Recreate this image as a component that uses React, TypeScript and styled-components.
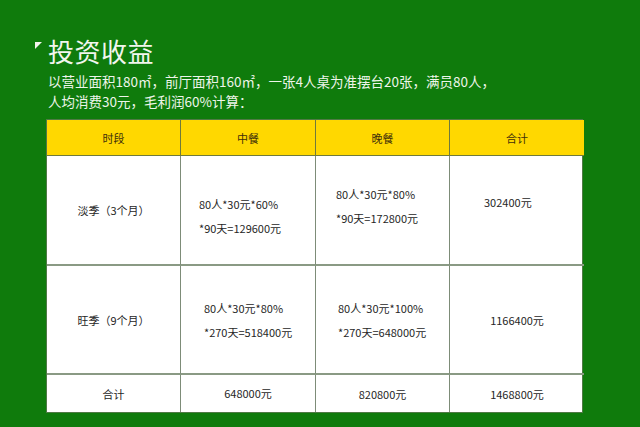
import React from "react";
import styled, { createGlobalStyle } from "styled-components";

const GlobalStyle = createGlobalStyle`
  html, body {
    margin: 0;
    padding: 0;
    background: #0f7b0c;
  }
  body {
    font-family: "Noto Sans CJK SC", "Noto Sans", sans-serif;
  }
`;

const Page = styled.div`
  width: 640px;
  height: 427px;
  background: #0f7b0c;
  padding: 34px 0 0 35px;
  box-sizing: border-box;
  overflow: hidden;
`;

const TitleRow = styled.div`
  display: flex;
  align-items: flex-start;
`;

const Marker = styled.span`
  width: 0;
  height: 0;
  margin-top: 8px;
  margin-right: 6px;
  border-top: 7px solid #f4f4ec;
  border-right: 7px solid transparent;
`;

const Title = styled.h1`
  margin: 0;
  font-size: 26px;
  font-weight: 400;
  line-height: 34px;
  color: #f2f6ee;
  letter-spacing: 0.5px;
`;

const Intro = styled.p`
  margin: 3px 0 0 13px;
  font-size: 13.5px;
  line-height: 20px;
  color: #eef5ea;
`;

const Table = styled.div`
  margin: 8px 0 0 11px;
  width: 537px;
  display: grid;
  grid-template-columns: 134px 135px 134px 134px;
  grid-template-rows: 36px 110px 109px 37px;
  background: #fff;
  border: 1px solid #4f7a45;
  box-sizing: border-box;
`;

const HeadCell = styled.div`
  background: #ffd800;
  display: flex;
  align-items: center;
  justify-content: center;
  font-size: 11px;
  color: #3f300a;
  border-right: 1px solid #6f7a3c;
  border-bottom: 1px solid #6f7a3c;
  &:nth-child(4) {
    border-right: none;
  }
`;

const Cell = styled.div<{ $left?: number; $shift?: number; $last?: boolean; $bottom?: boolean }>`
  display: flex;
  flex-direction: column;
  justify-content: center;
  align-items: ${(p) => (p.$left !== undefined ? "flex-start" : "center")};
  padding-left: ${(p) => p.$left ?? 0}px;
  padding-top: ${(p) => Math.max(0, (p.$shift ?? 0) * 2)}px;
  padding-bottom: ${(p) => Math.max(0, -(p.$shift ?? 0) * 2)}px;
  font-size: 11px;
  color: #262626;
  line-height: 24px;
  border-right: ${(p) => (p.$last ? "none" : "1px solid #7d8c78")};
  border-bottom: ${(p) => (p.$bottom ? "none" : "2px solid #8a9a84")};
  box-sizing: border-box;
`;

const Line = styled.span`
  white-space: nowrap;
`;

const rows = [
  {
    period: "淡季（3个月）",
    lunch: ["80人*30元*60%", "*90天=129600元"],
    lunchLeft: 18,
    lunchShift: 6,
    dinner: ["80人*30元*80%", "*90天=172800元"],
    dinnerLeft: 20,
    dinnerShift: -4,
    total: "302400元",
    totalLeft: 34,
    totalShift: -8,
  },
  {
    period: "旺季（9个月）",
    lunch: ["80人*30元*80%", "*270天=518400元"],
    lunchLeft: 23,
    lunchShift: 0,
    dinner: ["80人*30元*100%", "*270天=648000元"],
    dinnerLeft: 22,
    dinnerShift: 0,
    total: "1166400元",
    totalLeft: undefined,
    totalShift: 0,
  },
];

export default function App() {
  return (
    <Page>
      <GlobalStyle />
      <TitleRow>
        <Marker />
        <Title>投资收益</Title>
      </TitleRow>
      <Intro>
        以营业面积180㎡，前厅面积160㎡，一张4人桌为准摆台20张，满员80人，
        <br />
        人均消费30元，毛利润60%计算：
      </Intro>
      <Table>
        <HeadCell>时段</HeadCell>
        <HeadCell>中餐</HeadCell>
        <HeadCell>晚餐</HeadCell>
        <HeadCell>合计</HeadCell>
        {rows.map((r) => (
          <React.Fragment key={r.period}>
            <Cell>{r.period}</Cell>
            <Cell $left={r.lunchLeft} $shift={r.lunchShift}>
              {r.lunch.map((l) => (
                <Line key={l}>{l}</Line>
              ))}
            </Cell>
            <Cell $left={r.dinnerLeft} $shift={r.dinnerShift}>
              {r.dinner.map((l) => (
                <Line key={l}>{l}</Line>
              ))}
            </Cell>
            <Cell $left={r.totalLeft} $shift={r.totalShift} $last>
              {r.total}
            </Cell>
          </React.Fragment>
        ))}
        <Cell $bottom>合计</Cell>
        <Cell $bottom $shift={-1}>648000元</Cell>
        <Cell $bottom>820800元</Cell>
        <Cell $bottom $last>1468800元</Cell>
      </Table>
    </Page>
  );
}
